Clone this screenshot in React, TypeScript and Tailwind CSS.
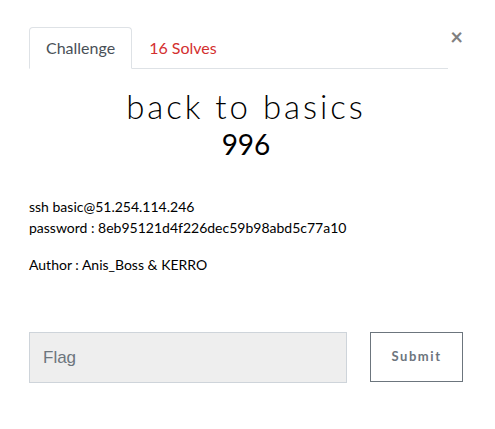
import { useState } from 'react';

const lato = { fontFamily: 'Lato, "Noto Sans", sans-serif' };

export default function App() {
  const [tab, setTab] = useState<'challenge' | 'solves'>('challenge');
  const [flag, setFlag] = useState('');

  return (
    <div
      className="h-[429px] w-[495px] bg-white pl-[29px] pr-[32px] pt-[27px] text-[#212529]"
      style={lato}
    >
      {/* Header: tabs + close */}
      <div className="flex items-start">
        <nav className="flex w-[420px] border-b border-[#dee2e6]">
          <button
            onClick={() => setTab('challenge')}
            className={`-mb-px rounded-t-[4px] border px-4 py-2 text-[16px] leading-6 ${
              tab === 'challenge'
                ? 'border-[#dee2e6] border-b-white bg-white text-[#495057]'
                : 'border-transparent text-[#d32f2f]'
            }`}
          >
            Challenge
          </button>
          <button
            onClick={() => setTab('solves')}
            className={`-mb-px rounded-t-[4px] border px-4 py-2 text-[16px] leading-6 ${
              tab === 'solves'
                ? 'border-[#dee2e6] border-b-white bg-white text-[#495057]'
                : 'border-transparent text-[#d32f2f]'
            }`}
          >
            16 Solves
          </button>
        </nav>
        <button className="ml-[2px] text-[22px] font-bold leading-5 text-[#808080]">
          ×
        </button>
      </div>

      {/* Title */}
      <div className="mt-[16px] text-center">
        <h1 className="text-[33px] font-light leading-[42px] tracking-[0.09em] text-black">
          back to basics
        </h1>
        <h3 className="text-[28px] leading-[34px] text-black">996</h3>
      </div>

      {/* Description */}
      <div className="mt-[35px] text-[14px] leading-[21px] text-black">
        <p>ssh basic@51.254.114.246</p>
        <p>password : 8eb95121d4f226dec59b98abd5c77a10</p>
        <p className="mt-[16px]">Author : Anis_Boss &amp; KERRO</p>
      </div>

      {/* Flag form */}
      <div className="mt-[57px] flex items-start">
        <input
          value={flag}
          onChange={e => setFlag(e.target.value)}
          placeholder="Flag"
          className="h-[51px] w-[318px] border border-[#ced4da] bg-[#eeeeee] px-[13px] text-[17px] text-[#495057] outline-none placeholder:text-[#6c757d]"
          style={{ fontFamily: '"Liberation Sans", Arial, sans-serif' }}
        />
        <button className="ml-[23px] h-[50px] w-[93px] border border-[#6c757d] bg-white text-[13px] font-bold tracking-[0.12em] text-[#6c757d]">
          Submit
        </button>
      </div>
    </div>
  );
}
